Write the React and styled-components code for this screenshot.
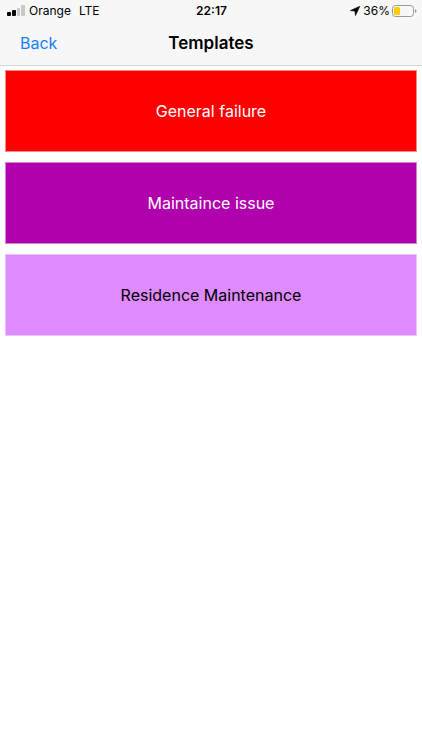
import React from "react";
import styled, { createGlobalStyle } from "styled-components";

const GlobalStyle = createGlobalStyle`
  * { box-sizing: border-box; }
  body { margin: 0; background: #fff; color: #000; font-family: Inter, "Liberation Sans", sans-serif; }
`;

const Header = styled.header`
  background: #f7f7f7;
  border-bottom: 1px solid #d4d4d4;
`;

const StatusBar = styled.div`
  display: grid;
  grid-template-columns: 1fr auto 1fr;
  align-items: center;
  height: 22px;
  padding: 0 5px 0 6px;
  font-size: 12px;
  line-height: 22px;
`;

const Carrier = styled.div`
  display: flex;
  align-items: center;
  gap: 4px;
`;

const Network = styled.span`
  margin-left: 4px;
`;

const Clock = styled.time`
  font-weight: 600;
`;

const Power = styled.div`
  display: flex;
  align-items: center;
  justify-content: flex-end;
  gap: 2px;
`;

const NavBar = styled.nav`
  display: grid;
  grid-template-columns: 1fr auto 1fr;
  align-items: center;
  height: 43px;
  padding: 0 20px 2px;
`;

const BackButton = styled.button`
  justify-self: start;
  padding: 0;
  border: 0;
  background: none;
  color: #157efb;
  font: inherit;
  font-size: 16px;
  line-height: 20px;
`;

const Title = styled.h1`
  margin: 0;
  font-size: 17px;
  font-weight: 600;
  line-height: 20px;
`;

const TemplateList = styled.main`
  display: flex;
  flex-direction: column;
  gap: 10px;
  padding: 4px 5px;
`;

const TemplateButton = styled.button`
  height: 82px;
  padding: 0 16px;
  border: 1px solid ${(p) => p.$edge};
  background: ${(p) => p.$fill};
  color: ${(p) => p.$ink};
  font: inherit;
  font-size: 16px;
  line-height: 20px;
`;

const templates = [
  { name: "General failure", fill: "#ff0000", edge: "#f88880", ink: "#fff" },
  { name: "Maintaince issue", fill: "#b100ad", edge: "#d384d0", ink: "#fff" },
  { name: "Residence Maintenance", fill: "#df8aff", edge: "#ebc4fa", ink: "#000" },
];

const SignalIcon = () => (
  <svg width="19" height="12" viewBox="0 0 19 12" aria-hidden="true">
    <rect x="1" y="7" width="4" height="4" rx="1" />
    <rect x="6" y="5" width="4" height="6" rx="1" />
    <rect x="11" y="3" width="3" height="8" rx="1" fill="#c8c8c8" />
    <rect x="15" y="0" width="4" height="11" rx="1" fill="#c8c8c8" />
  </svg>
);

const LocationIcon = () => (
  <svg width="11" height="10" viewBox="0 0 11 10" aria-hidden="true">
    <path d="M9.800 .3 .4 4.600 4.900 5.100 5.500 9.600Z" stroke="#000" strokeWidth=".6" strokeLinejoin="round" />
  </svg>
);

const BatteryIcon = () => (
  <svg width="25" height="12" viewBox="0 0 25 12" aria-hidden="true">
    <rect x=".5" y=".5" width="21" height="11" rx="3" fill="none" stroke="#999" />
    <rect x="2" y="2" width="6" height="8" rx="1.5" fill="#fc0" />
    <path d="M23 4v4c2-.7 2-3.300 0-4Z" fill="#999" />
  </svg>
);

export default function App() {
  return (
    <>
      <GlobalStyle />
      <Header>
        <StatusBar>
          <Carrier><SignalIcon /><span>Orange</span><Network>LTE</Network></Carrier>
          <Clock>22:17</Clock>
          <Power><LocationIcon /><span>36%</span><BatteryIcon /></Power>
        </StatusBar>
        <NavBar>
          <BackButton type="button">Back</BackButton>
          <Title>Templates</Title>
        </NavBar>
      </Header>
      <TemplateList>
        {templates.map((t) => (
          <TemplateButton key={t.name} type="button" $fill={t.fill} $edge={t.edge} $ink={t.ink}>{t.name}</TemplateButton>
        ))}
      </TemplateList>
    </>
  );
}
